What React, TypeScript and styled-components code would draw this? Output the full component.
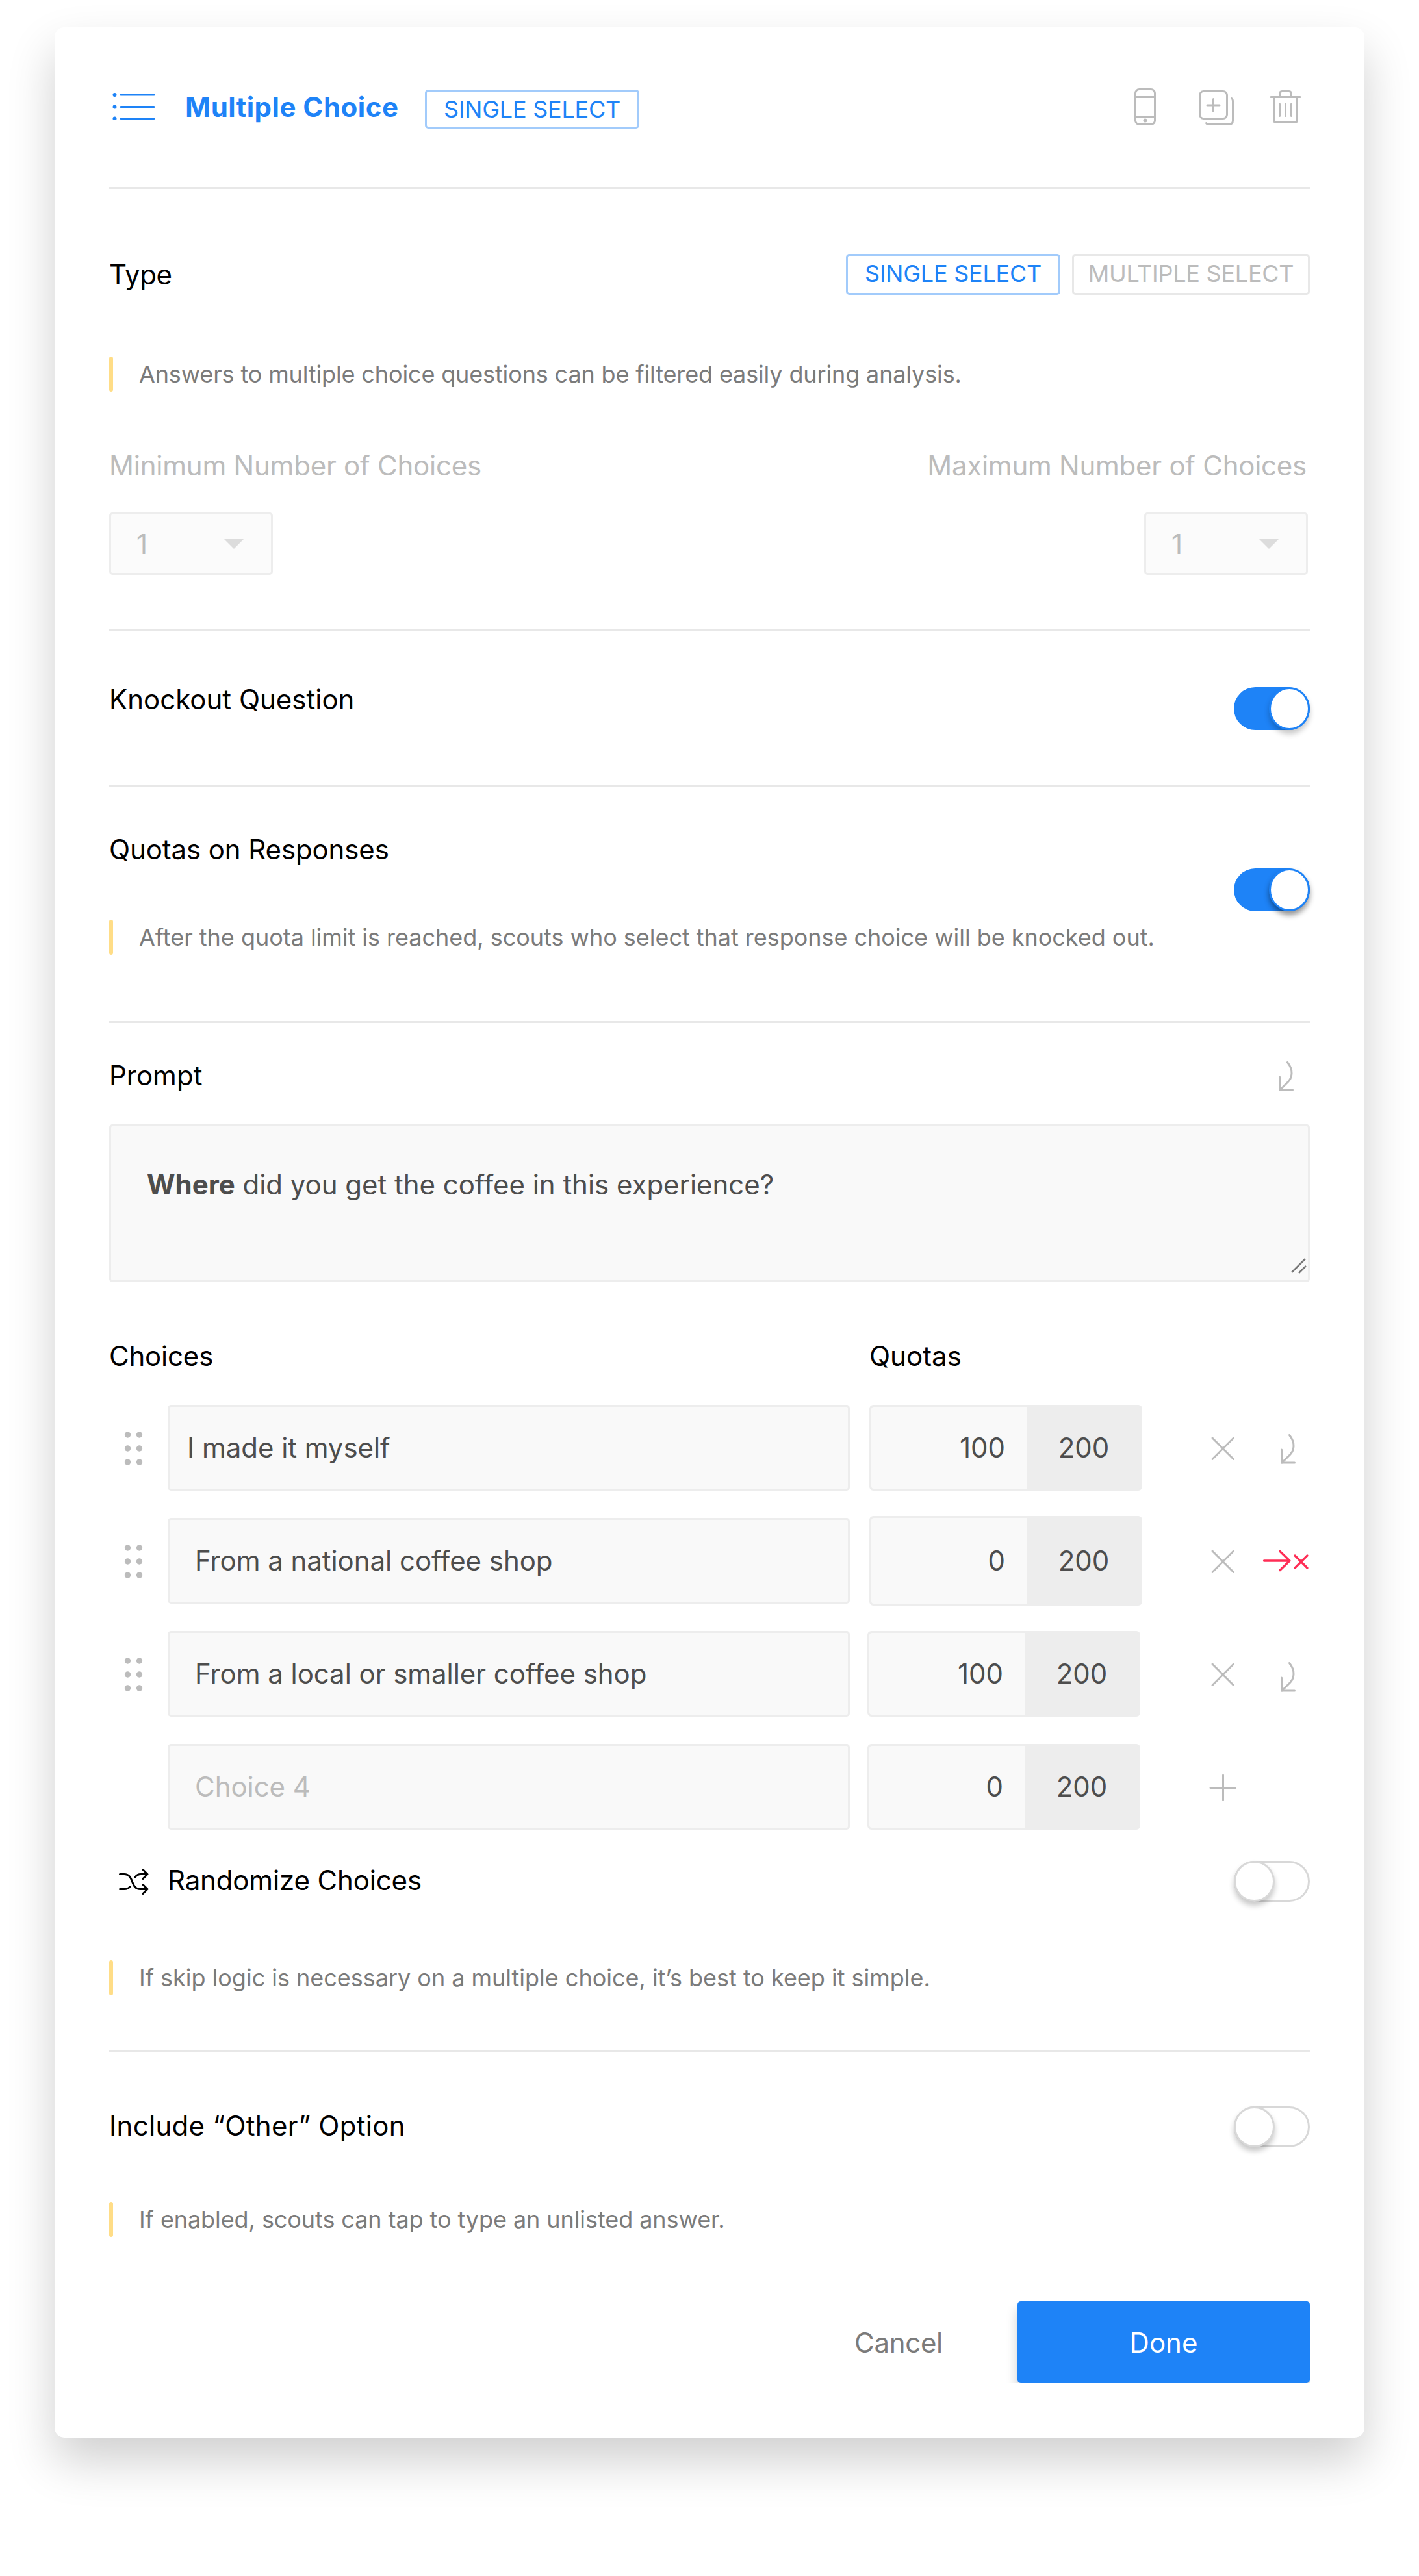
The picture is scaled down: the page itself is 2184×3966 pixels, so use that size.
import { ReactNode, useState } from "react";
import styled, { createGlobalStyle } from "styled-components";

const GlobalStyle = createGlobalStyle`
  * {
    box-sizing: border-box;
  }
  body {
    margin: 0;
    background: #fff;
    font-family: Inter, "Liberation Sans", sans-serif;
    font-size: 42px;
    color: #000;
  }
`;

const Page = styled.main`
  width: 2184px;
  height: 3966px;
  padding: 42px 84px 0;
`;

const Card = styled.form`
  height: 3711px;
  padding: 0 84px;
  border-radius: 15px;
  background: #fff;
  box-shadow: 0 36px 72px rgba(0, 0, 0, 0.19);
`;

const Header = styled.header`
  display: flex;
  align-items: center;
  height: 249px;
  padding-left: 5px;
  border-bottom: 3px solid #e8e8e8;
`;

const TypeIcon = styled.span`
  display: flex;
  margin-bottom: 3px;
`;

const Title = styled.h1`
  margin: 0 0 0 46px;
  width: 369px;
  font-size: 42px;
  font-weight: 700;
  line-height: 54px;
  letter-spacing: 0.5px;
  color: #1e83f7;
  white-space: nowrap;
`;

const Actions = styled.div`
  display: flex;
  margin: 0 12px 3px auto;
`;

const Tag = styled.span`
  display: flex;
  align-items: center;
  justify-content: center;
  width: 330px;
  height: 60px;
  margin-top: 6px;
  border: 3px solid #a2cbfb;
  border-radius: 5px;
  font-size: 36px;
  letter-spacing: -0.25px;
  color: #1e83f7;
  white-space: nowrap;
`;

const TypeButton = styled.button<{ $active?: boolean }>`
  width: ${(props) => (props.$active ? 330 : 366)}px;
  height: 63px;
  padding: 0 0 3px;
  border: 3px solid ${(props) => (props.$active ? "#a2cbfb" : "#e8e8e8")};
  border-radius: 5px;
  background: #fff;
  font-family: inherit;
  font-size: 36px;
  letter-spacing: -0.25px;
  color: ${(props) => (props.$active ? "#1e83f7" : "#bcbcbc")};
  white-space: nowrap;
`;

const Section = styled.section<{ $top: number; $bottom?: number }>`
  padding-top: ${(props) => props.$top}px;
  padding-bottom: ${(props) => props.$bottom || 0}px;
  border-bottom: ${(props) => (props.$bottom ? "3px solid #e8e8e8" : "none")};
`;

const Row = styled.div<{ $top?: number; $align?: string }>`
  display: flex;
  justify-content: space-between;
  align-items: ${(props) => props.$align || "center"};
  margin-top: ${(props) => props.$top || 0}px;
`;

const ButtonGroup = styled.div`
  display: flex;
  gap: 18px;
`;

const Label = styled.div<{ $muted?: boolean; $spacing?: number; $lift?: number }>`
  margin-bottom: ${(props) => props.$lift || 0}px;
  line-height: 54px;
  letter-spacing: ${(props) => props.$spacing || 0}px;
  color: ${(props) => (props.$muted ? "#bcbcbc" : "#000")};
  white-space: nowrap;
`;

const HintBox = styled.div<{ $top: number; $spacing: number }>`
  display: flex;
  gap: 40px;
  height: 54px;
  margin-top: ${(props) => props.$top}px;
  font-size: 36px;
  line-height: 54px;
  letter-spacing: ${(props) => props.$spacing}px;
  color: #7b7b7b;
  white-space: nowrap;

  &::before {
    content: "";
    width: 6px;
    border-radius: 3px;
    background: #ffdd87;
  }
`;

const Limit = styled.div<{ $end?: boolean }>`
  display: flex;
  flex-direction: column;
  gap: 45px;
  align-items: ${(props) => (props.$end ? "flex-end" : "flex-start")};
  margin-right: ${(props) => (props.$end ? 3 : 0)}px;

  ${Label} {
    margin-right: ${(props) => (props.$end ? 2 : 0)}px;
  }
`;

const Select = styled.div`
  display: flex;
  align-items: center;
  justify-content: space-between;
  width: 252px;
  height: 96px;
  padding: 0 42px 0 39px;
  border: 3px solid #ededed;
  border-radius: 5px;
  background: #fbfbfb;
  color: #bcbcbc;
`;

const SwitchTrack = styled.button<{ $on: boolean; $top?: number }>`
  display: flex;
  flex: none;
  justify-content: ${(props) => (props.$on ? "flex-end" : "flex-start")};
  width: 117px;
  height: ${(props) => (props.$on ? 66 : 63)}px;
  margin: ${(props) => props.$top || 0}px 0 0;
  padding: ${(props) => (props.$on ? "3px" : "0")};
  border: none;
  border-radius: 33px;
  background: ${(props) => (props.$on ? "#1e83f7" : "#fff")};
  box-shadow: ${(props) => (props.$on ? "none" : "inset 0 0 0 3px #d8d8d8")};
`;

const SwitchKnob = styled.span<{ $on: boolean; $strong?: boolean }>`
  width: ${(props) => (props.$on ? 57 : 63)}px;
  height: ${(props) => (props.$on ? 60 : 63)}px;
  border: ${(props) => (props.$on ? "none" : "3px solid #d8d8d8")};
  border-radius: 50%;
  background: #fff;
  box-shadow:
    0 0 0 ${(props) => (props.$on ? 3 : 0)}px #1e83f7,
    0 6px 9px ${(props) => (props.$on ? 3 : 0)}px rgba(0, 0, 0, ${(props) => (props.$strong ? 0.42 : 0.22)});
`;

const Prompt = styled.div`
  display: flex;
  justify-content: space-between;
  height: 243px;
  margin-top: 48px;
  padding: 63px 0 7px 55px;
  border: 3px solid #ededed;
  border-radius: 5px;
  background: #f9f9f9;
  line-height: 54px;
  letter-spacing: -0.03px;
  color: #4d4d4d;

  svg {
    align-self: flex-end;
  }
`;

const PromptSkip = styled.span`
  display: flex;
  margin: 2px 3px 0 0;
`;

const Headings = styled.div`
  display: grid;
  grid-template-columns: 1170px 1fr;
  margin-top: 87px;
`;

const ChoiceList = styled.div`
  display: flex;
  flex-direction: column;
  gap: 42px;
  margin-top: 48px;
`;

const ChoiceRow = styled.div`
  display: grid;
  grid-template-columns: 90px 1050px 450px 1fr;
  grid-template-rows: 132px;
  align-items: center;
  height: 132px;
`;

const ChoiceInput = styled.div<{ $indent: number; $empty?: boolean }>`
  height: 132px;
  padding-left: ${(props) => props.$indent}px;
  border: 3px solid #ededed;
  border-radius: 5px;
  background: #f9f9f9;
  line-height: 126px;
  letter-spacing: -0.05px;
  color: ${(props) => (props.$empty ? "#bcbcbc" : "#4d4d4d")};
`;

const Quota = styled.div<{ $tall?: boolean; $shift: number }>`
  display: flex;
  width: 420px;
  height: ${(props) => (props.$tall ? 138 : 132)}px;
  margin-left: ${(props) => props.$shift}px;
  border: 3px solid #ededed;
  border-radius: 6px;
  background: #ededed;
  line-height: ${(props) => (props.$tall ? 131 : 126)}px;
  color: #4d4d4d;
`;

const QuotaValue = styled.span`
  width: 240px;
  padding-right: 34px;
  border-radius: 4px 0 0 4px;
  background: #f9f9f9;
  text-align: right;
`;

const QuotaLimit = styled.span`
  flex: 1;
  text-align: center;
`;

const RowActions = styled.div`
  display: flex;
  justify-content: space-between;
  align-items: center;
  padding: 1px 0 0 103px;
`;

const SkipSlot = styled.span<{ $drop: number }>`
  display: flex;
  padding-top: ${(props) => props.$drop}px;
`;

const GripIcon = styled.svg`
  display: block;
  margin-left: 22px;
`;

const RandomLabel = styled.div`
  display: flex;
  align-items: center;
  gap: 27px;
  padding-left: 12px;
`;

const Footer = styled.footer`
  display: flex;
  justify-content: flex-end;
  margin-top: 99px;
`;

const CancelButton = styled.button`
  padding: 0;
  margin-right: 115px;
  border: none;
  background: none;
  font: inherit;
  letter-spacing: -0.3px;
  color: #7b7b7b;
`;

const DoneButton = styled.button`
  width: 450px;
  height: 126px;
  border: none;
  border-radius: 5px;
  background: #1e83f7;
  box-shadow: 0 12px 18px rgba(0, 0, 0, 0.2);
  clip-path: inset(0 0 0 -30px);
  font: inherit;
  color: #fff;
`;

const ListIcon = () => (
  <svg width="66" height="42" viewBox="0 0 66 42" stroke="#1e83f7" strokeWidth="3" strokeLinecap="round">
    {[3, 21.5, 39.5].map((y) => (
      <g key={y}>
        <circle cx="3.5" cy={y} r="3" fill="#1e83f7" stroke="none" />
        <path d={`M13 ${y}H64`} />
      </g>
    ))}
  </svg>
);

// phone, duplicate and delete, on one 260px strip
const HeaderIcons = () => (
  <svg
    width="260"
    height="60"
    viewBox="0 0 260 60"
    fill="none"
    stroke="#bcbcbc"
    strokeWidth="3"
    strokeLinecap="round"
    strokeLinejoin="round"
  >
    <rect x="3.5" y="3.5" width="30" height="54" rx="6" />
    <path d="M3.5 15.5H33.5M3.5 45.5H33.5" />
    <circle cx="18.5" cy="51.5" r="3" fill="#bcbcbc" stroke="none" />
    <rect x="102.5" y="6.5" width="42" height="42" rx="6" />
    <path d="M123.5 18.5V37.5M114 28H133" />
    <path d="M151.5 17.5Q153.5 18.5 153.5 22V51.5Q153.5 57.5 147.5 57.5H117Q113.5 57.5 112.5 55.5" />
    <path d="M212 15.5H257M225.5 15V10.5Q225.5 6.5 229.5 6.5H239.5Q243.5 6.5 243.5 10.5V15" />
    <path d="M216.5 15.5V50.5Q216.5 54.5 220.5 54.5H248.5Q252.5 54.5 252.5 50.5V15.5" />
    <path d="M225.5 26V44.5M234.5 26V44.5M243.5 26V44.5" />
  </svg>
);

const SkipIcon = () => (
  <svg width="74" height="48" viewBox="0 0 74 48" fill="none" stroke="#bcbcbc" strokeWidth="3" strokeLinecap="round">
    <path d="M42.5 2.5C47 8 49.3 14 49 20C48.5 27 46 29.5 43 33L31 45" />
    <path d="M30.5 25V45H50.5" />
  </svg>
);

const KnockoutIcon = () => (
  <svg
    width="74"
    height="48"
    viewBox="0 0 74 48"
    fill="none"
    stroke="#ff2d55"
    strokeWidth="3.3"
    strokeLinecap="round"
    strokeLinejoin="round"
  >
    <path d="M3.5 23H43M28 8.5L43 23L28 37.5" />
    <path d="M51 15L70 34M70 15L51 34" />
  </svg>
);

const RemoveIcon = () => (
  <svg width="42" height="42" viewBox="0 0 42 42" stroke="#bcbcbc" strokeWidth="3" strokeLinecap="round">
    <path d="M5 5L37.5 37.5M37.5 5L5 37.5" />
  </svg>
);

const AddIcon = () => (
  <svg width="42" height="42" viewBox="0 0 42 42" stroke="#bcbcbc" strokeWidth="3" strokeLinecap="round">
    <path d="M21.5 2V41M2 21.5H41" />
  </svg>
);

const Grip = () => (
  <GripIcon width="30" height="54" viewBox="0 0 30 54" fill="#bcbcbc">
    {[7, 28, 49].map((y) => (
      <g key={y}>
        <circle cx="6.5" cy={y} r="4.7" />
        <circle cx="24.5" cy={y} r="4.7" />
      </g>
    ))}
  </GripIcon>
);

const ShuffleIcon = () => (
  <svg
    width="51"
    height="42"
    viewBox="0 0 51 42"
    fill="none"
    stroke="#000"
    strokeWidth="3"
    strokeLinecap="round"
    strokeLinejoin="round"
  >
    <path d="M4.5 9.5H11C27 9.5 20 32.5 36 32.5H47M40 25.5L47 32.5L40 39.5" />
    <path d="M4.5 32.5H11Q17.5 32.5 20 28.5M28 14Q31 9.5 37 9.5H47M40 2.5L47 9.5L40 16.5" />
  </svg>
);

const Caret = () => (
  <svg width="30" height="15" viewBox="0 0 30 15">
    <path d="M0 0H30L15 15Z" fill="#dcdcdc" />
  </svg>
);

const ResizeHandle = () => (
  <svg width="30" height="30" viewBox="0 0 30 30" stroke="#777" strokeWidth="2.5">
    <path d="M5 25L26 4M16 26L27 15" />
  </svg>
);

const Hint = ({ top, spacing = 0, children }: { top: number; spacing?: number; children: ReactNode }) => (
  <HintBox $top={top} $spacing={spacing}>
    {children}
  </HintBox>
);

interface ISwitch {
  initial?: boolean;
  strong?: boolean;
  top?: number;
}

const Switch = ({ initial = false, strong, top }: ISwitch) => {
  const [on, setOn] = useState(initial);
  return (
    <SwitchTrack type="button" $on={on} $top={top} onClick={() => setOn(!on)}>
      <SwitchKnob $on={on} $strong={strong} />
    </SwitchTrack>
  );
};

interface IChoice {
  text: string;
  quota: number;
  indent: number;
  shift: number;
  drop?: number;
  knockout?: boolean;
  empty?: boolean;
}

const choices: IChoice[] = [
  { text: "I made it myself", quota: 100, indent: 27, shift: 30, drop: 2 },
  { text: "From a national coffee shop", quota: 0, indent: 39, shift: 30, knockout: true },
  { text: "From a local or smaller coffee shop", quota: 100, indent: 39, shift: 27, drop: 8 },
  { text: "Choice 4", quota: 0, indent: 39, shift: 27, empty: true },
];

function App() {
  return (
    <>
      <GlobalStyle />
      <Page>
        <Card>
          <Header>
            <TypeIcon>
              <ListIcon />
            </TypeIcon>
            <Title>Multiple Choice</Title>
            <Tag>SINGLE SELECT</Tag>
            <Actions>
              <HeaderIcons />
            </Actions>
          </Header>

          <Section $top={100} $bottom={84}>
            <Row>
              <Label $spacing={-0.4}>Type</Label>
              <ButtonGroup>
                <TypeButton type="button" $active>
                  SINGLE SELECT
                </TypeButton>
                <TypeButton type="button">MULTIPLE SELECT</TypeButton>
              </ButtonGroup>
            </Row>
            <Hint top={95} spacing={-0.14}>
              Answers to multiple choice questions can be filtered easily during analysis.
            </Hint>
            <Row $top={87}>
              <Limit>
                <Label $muted $spacing={-0.22}>
                  Minimum Number of Choices
                </Label>
                <Select>
                  1<Caret />
                </Select>
              </Limit>
              <Limit $end>
                <Label $muted $spacing={-0.25}>
                  Maximum Number of Choices
                </Label>
                <Select>
                  1<Caret />
                </Select>
              </Limit>
            </Row>
          </Section>

          <Section $top={78} $bottom={85}>
            <Row $align="flex-start">
              <Label>Knockout Question</Label>
              <Switch initial top={8} />
            </Row>
          </Section>

          <Section $top={69} $bottom={102}>
            <Row $align="flex-start">
              <div>
                <Label $spacing={-0.12}>Quotas on Responses</Label>
                <Hint top={81} spacing={-0.03}>
                  After the quota limit is reached, scouts who select that response choice will be knocked out.
                </Hint>
              </div>
              <Switch initial strong top={56} />
            </Row>
          </Section>

          <Section $top={54} $bottom={84}>
            <Row>
              <Label>Prompt</Label>
              <PromptSkip>
                <SkipIcon />
              </PromptSkip>
            </Row>
            <Prompt>
              <span>
                <b>Where</b> did you get the coffee in this experience?
              </span>
              <ResizeHandle />
            </Prompt>
            <Headings>
              <Label $spacing={-0.2}>Choices</Label>
              <Label>Quotas</Label>
            </Headings>
            <ChoiceList>
              {choices.map((choice) => (
                <ChoiceRow key={choice.text}>
                  <div>{!choice.empty && <Grip />}</div>
                  <ChoiceInput $indent={choice.indent} $empty={choice.empty}>
                    {choice.text}
                  </ChoiceInput>
                  <Quota $tall={choice.knockout} $shift={choice.shift}>
                    <QuotaValue>{choice.quota}</QuotaValue>
                    <QuotaLimit>200</QuotaLimit>
                  </Quota>
                  <RowActions>
                    {choice.empty ? <AddIcon /> : <RemoveIcon />}
                    {!choice.empty && (
                      <SkipSlot $drop={choice.drop || 0}>
                        {choice.knockout ? <KnockoutIcon /> : <SkipIcon />}
                      </SkipSlot>
                    )}
                  </RowActions>
                </ChoiceRow>
              ))}
            </ChoiceList>
            <Row $top={48}>
              <RandomLabel>
                <ShuffleIcon />
                <Label $spacing={-0.15} $lift={3}>
                  Randomize Choices
                </Label>
              </RandomLabel>
              <Switch />
            </Row>
            <Hint top={90} spacing={-0.02}>
              If skip logic is necessary on a multiple choice, it’s best to keep it simple.
            </Hint>
          </Section>

          <Section $top={84}>
            <Row>
              <Label $spacing={0.3} $lift={3}>
                Include “Other” Option
              </Label>
              <Switch />
            </Row>
            <Hint top={84} spacing={-0.08}>
              If enabled, scouts can tap to type an unlisted answer.
            </Hint>
          </Section>

          <Footer>
            <CancelButton type="button">Cancel</CancelButton>
            <DoneButton type="button">Done</DoneButton>
          </Footer>
        </Card>
      </Page>
    </>
  );
}

export default App;
